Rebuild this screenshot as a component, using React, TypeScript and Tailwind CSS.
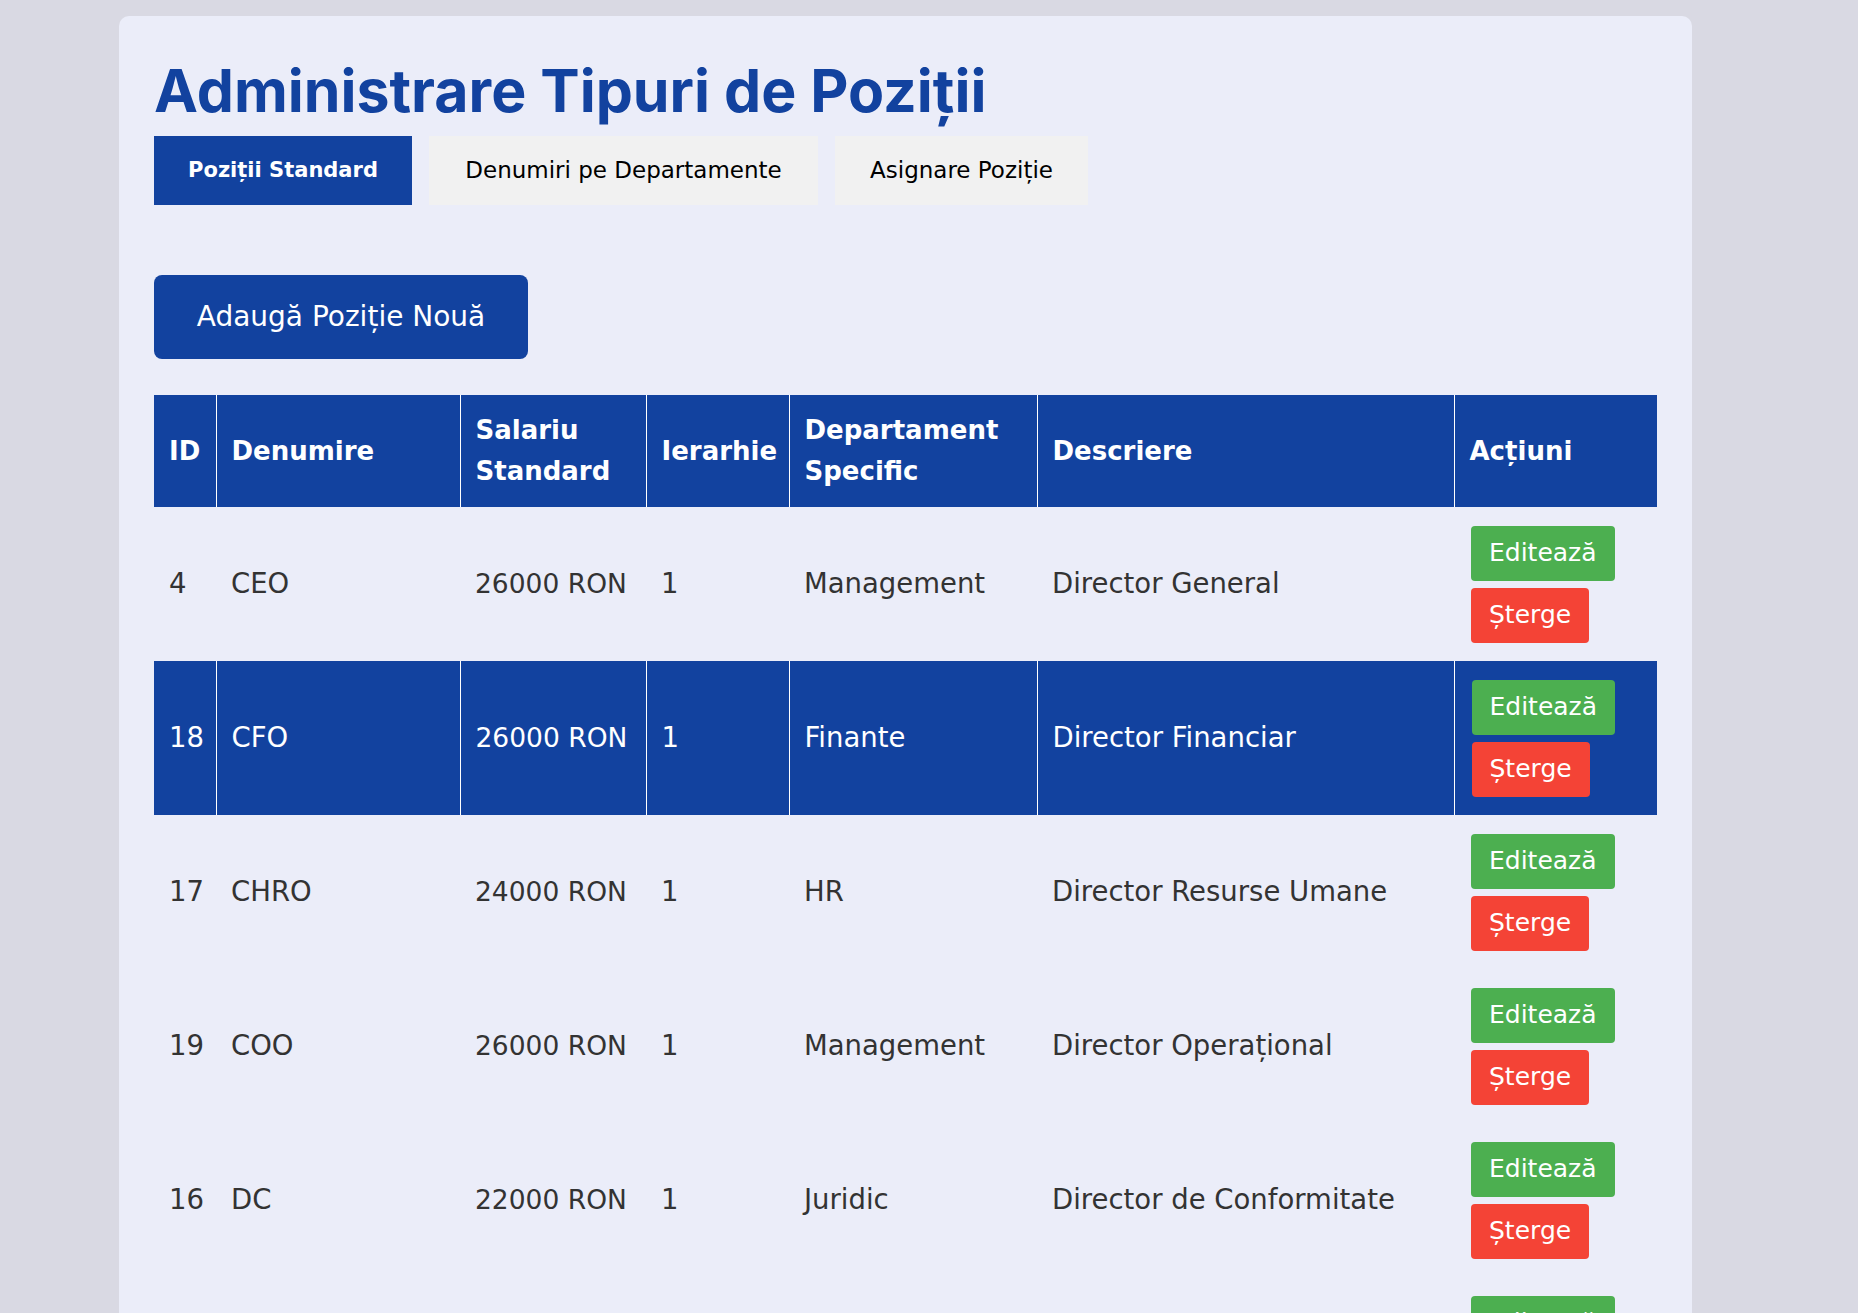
import React from "react";

type Position = {
  id: number;
  name: string;
  salary: string;
  level: number;
  department: string;
  description: string;
};

const positions: Position[] = [
  { id: 4, name: "CEO", salary: "26000 RON", level: 1, department: "Management", description: "Director General" },
  { id: 18, name: "CFO", salary: "26000 RON", level: 1, department: "Finante", description: "Director Financiar" },
  { id: 17, name: "CHRO", salary: "24000 RON", level: 1, department: "HR", description: "Director Resurse Umane" },
  { id: 19, name: "COO", salary: "26000 RON", level: 1, department: "Management", description: "Director Operațional" },
  { id: 16, name: "DC", salary: "22000 RON", level: 1, department: "Juridic", description: "Director de Conformitate" },
  { id: 20, name: "CTO", salary: "26000 RON", level: 1, department: "IT", description: "Director Tehnic" },
];

const headers = [
  { label: "ID", w: "w-[62px]" },
  { label: "Denumire", w: "w-[244px]" },
  { label: "Salariu Standard", w: "w-[186px]" },
  { label: "Ierarhie", w: "w-[143px]" },
  { label: "Departament Specific", w: "w-[248px]" },
  { label: "Descriere", w: "w-[417px]" },
  { label: "Acțiuni", w: "w-[203px]" },
];

const App = () => {
  return (
    <div className="min-h-screen bg-[#d9d9e3] pt-[16px] font-['DejaVu_Sans',sans-serif]">
      <div className="ml-[119px] w-[1573px] rounded-[10px] bg-[#ebedf9] px-[35px] pt-[40px] pb-[40px]">
        <h1 className="font-['Inter',sans-serif] text-[59px] font-bold leading-[70px] text-[#12429f]">
          Administrare Tipuri de Poziții
        </h1>

        <div className="mt-[10px] flex gap-[17px]">
          <button className="h-[69px] w-[258px] bg-[#12429f] text-[21px] font-bold text-white">
            Poziții Standard
          </button>
          <button className="h-[69px] w-[389px] bg-[#f1f1f1] text-[23px] text-black">
            Denumiri pe Departamente
          </button>
          <button className="h-[69px] w-[253px] bg-[#f1f1f1] text-[23px] text-black">
            Asignare Poziție
          </button>
        </div>

        <button className="mt-[70px] h-[84px] w-[374px] rounded-[8px] bg-[#12429f] text-[28px] text-white">
          Adaugă Poziție Nouă
        </button>

        <table className="mt-[36px] w-[1503px] table-fixed border-collapse">
          <thead>
            <tr className="h-[112px] bg-[#12429f] text-white">
              {headers.map((h, i) => (
                <th
                  key={h.label}
                  className={`${h.w} px-[15px] text-left text-[26px] font-bold leading-[41px] ${
                    i > 0 ? "border-l border-white" : ""
                  }`}
                >
                  {h.label}
                </th>
              ))}
            </tr>
          </thead>
          <tbody>
            {positions.map((p) => {
              const active = p.id === 18;
              const cell = `px-[15px] whitespace-nowrap ${active ? "text-white" : "text-[#333]"}`;
              const bordered = active ? "border-l border-white" : "";
              return (
                <tr key={p.id} className={`h-[154px] ${active ? "bg-[#12429f]" : ""}`}>
                  <td className={`${cell} text-[27.5px]`}>{p.id}</td>
                  <td className={`${cell} ${bordered} text-[27.5px]`}>{p.name}</td>
                  <td className={`${cell} ${bordered} text-[26.5px]`}>{p.salary}</td>
                  <td className={`${cell} ${bordered} text-[27.5px]`}>{p.level}</td>
                  <td className={`${cell} ${bordered} text-[27.5px]`}>{p.department}</td>
                  <td className={`${cell} ${bordered} text-[27.5px]`}>{p.description}</td>
                  <td className={`${bordered} py-[16px] pl-[17px]`}>
                    <div className="flex flex-col items-start gap-[7px]">
                      <button className="h-[55px] rounded-[4px] bg-[#4caf50] px-[18px] text-[25px] text-white">
                        Editează
                      </button>
                      <button className="h-[55px] rounded-[4px] bg-[#f44336] px-[18px] text-[25px] text-white">
                        Șterge
                      </button>
                    </div>
                  </td>
                </tr>
              );
            })}
          </tbody>
        </table>
      </div>
    </div>
  );
};

export default App;
